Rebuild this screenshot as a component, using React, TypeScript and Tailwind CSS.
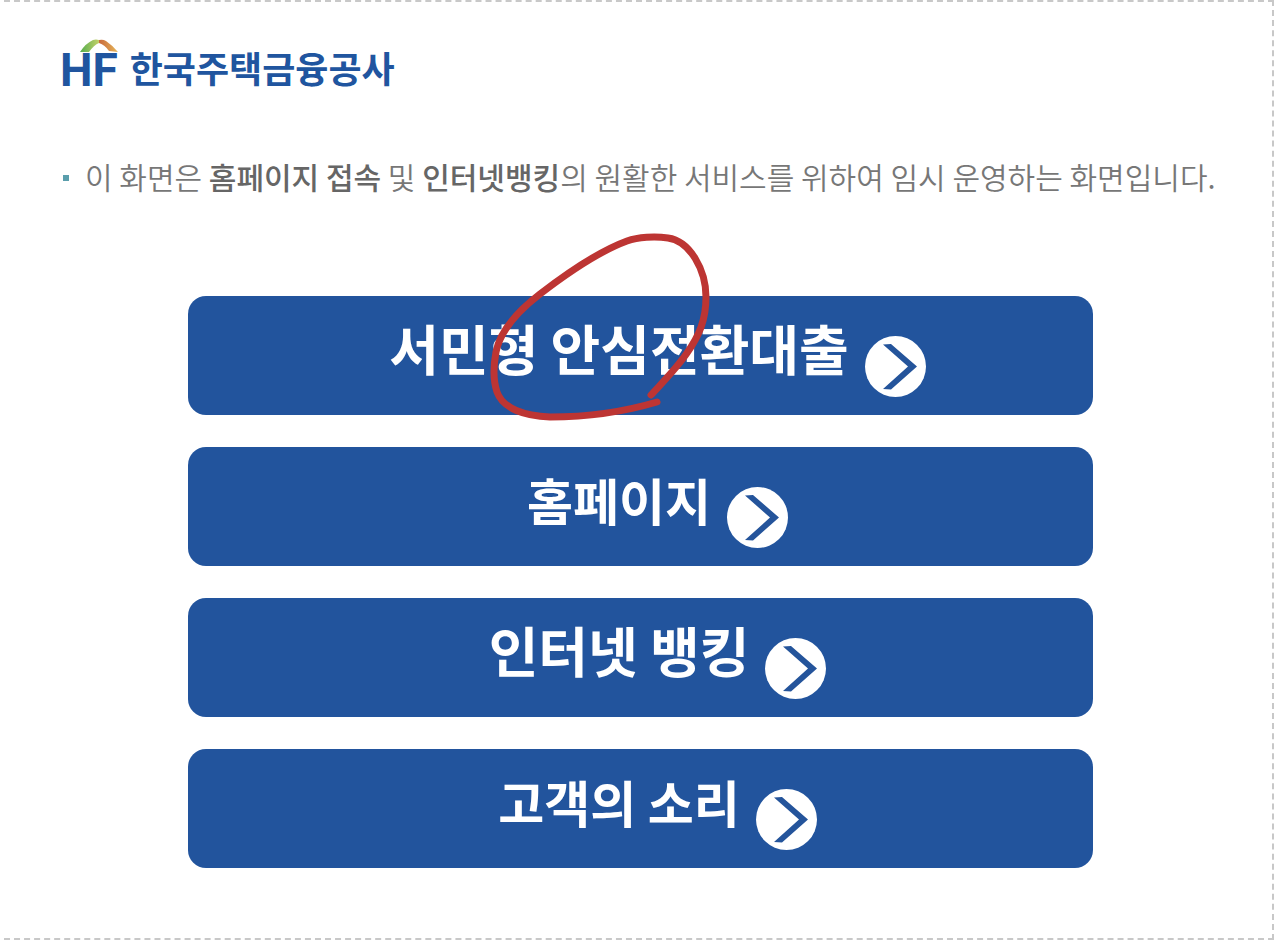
type MenuItem = {
  label: string;
  href: string;
  size: string;
  circled?: boolean;
};

const menu: MenuItem[] = [
  { label: "서민형 안심전환대출", href: "#loan", size: "text-[54px]", circled: true },
  { label: "홈페이지", href: "#home", size: "text-[50px]" },
  { label: "인터넷 뱅킹", href: "#banking", size: "text-[54px]" },
  { label: "고객의 소리", href: "#voice", size: "text-[50px]" },
];

function Logo() {
  return (
    <a href="#top" className="flex w-fit items-start gap-3 text-[#20559f]">
      <span className="relative font-['Roboto',sans-serif] text-[46px] leading-[56px] font-bold">
        HF
        <svg
          className="absolute -top-1 left-5 h-4 w-10"
          viewBox="0 0 40 16"
          aria-hidden="true"
        >
          <defs>
            <linearGradient id="roofLeft">
              <stop offset="0" stopColor="#55ad4d" />
              <stop offset="1" stopColor="#c3d069" />
            </linearGradient>
            <linearGradient id="roofRight">
              <stop offset="0" stopColor="#c8693b" />
              <stop offset="1" stopColor="#e6b75a" />
            </linearGradient>
          </defs>
          <path d="M0 14 Q6 5 13 2 Q16 1 19 2 L19 5 Q14 7 9 14 Z" fill="url(#roofLeft)" />
          <path d="M19 2 Q23 1 26 3 Q32 7 38 14 L29 13 Q25 7 19 5 Z" fill="url(#roofRight)" />
        </svg>
      </span>
      <span className="text-4xl leading-[50px] font-bold">한국주택금융공사</span>
    </a>
  );
}

function ArrowIcon() {
  return (
    <svg className="h-[61px] w-[61px] shrink-0" viewBox="0 0 61 61" aria-hidden="true">
      <circle cx="30.5" cy="30.5" r="30.5" fill="#fff" />
      <path d="M18 8.5 L26 8 L52 30.5 L26 53.5 L18 53 L43 30.5 Z" fill="#24549b" />
    </svg>
  );
}

function PenCircle() {
  return (
    <svg
      className="pointer-events-none absolute -top-[66px] left-1/2 -ml-[153px] h-[194px] w-[226px]"
      viewBox="488 230 226 194"
      fill="none"
      stroke="#bd3533"
      strokeWidth="7"
      strokeLinecap="round"
      strokeLinejoin="round"
      aria-hidden="true"
    >
      <path d="M651 395 C661 384 676 369 687 353 C699 336 706 320 706 297 C706 270 690 241 668 238 C655 236 638 237 627 241 C597 252 566 274 540 294 C518 311 500 331 496 352 C493 368 493 380 497 392 C503 409 525 416 550 417 C585 417 620 413 657 402" />
    </svg>
  );
}

export default function App() {
  return (
    <div className="bg-white pl-1 font-['Noto_Sans_CJK_KR',sans-serif]">
      <main className="border-2 border-l-0 border-dashed border-[#c8c8c8] pt-10 pb-[70px]">
        <header className="pl-14">
          <Logo />
        </header>
        <p className="mt-14 flex items-center gap-4 pl-[59px] text-[30px] leading-[44px] font-[350] whitespace-nowrap text-[#777]">
          <span className="mt-1 h-[6px] w-[6px] shrink-0 bg-[#5a9eac]" />
          <span>
            이 화면은 <b className="font-medium text-[#666]">홈페이지 접속</b> 및{" "}
            <b className="font-medium text-[#666]">인터넷뱅킹</b>의 원활한 서비스를 위하여 임시
            운영하는 화면입니다.
          </span>
        </p>
        <nav className="mt-[98px] pr-[179px] pl-[184px]">
          <ul className="flex flex-col gap-8">
            {menu.map((item) => (
              <li key={item.href} className="relative">
                <a
                  href={item.href}
                  className="flex h-[119px] items-start justify-center gap-4 rounded-[18px] bg-[#22549d] pt-3 pl-[34px] font-bold whitespace-nowrap text-white"
                >
                  <span className={`${item.size} leading-[80px]`}>{item.label}</span>
                  <span className="pt-7">
                    <ArrowIcon />
                  </span>
                </a>
                {item.circled && <PenCircle />}
              </li>
            ))}
          </ul>
        </nav>
      </main>
    </div>
  );
}
